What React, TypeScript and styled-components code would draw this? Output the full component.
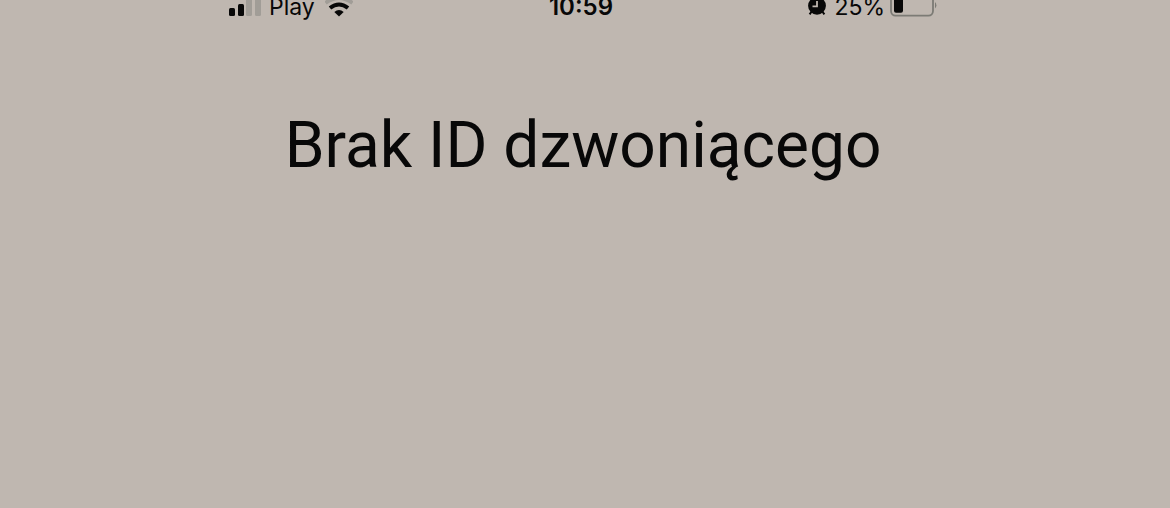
import React from "react";
import styled, { createGlobalStyle } from "styled-components";

const GlobalStyle = createGlobalStyle`
  body {
    margin: 0;
    background: #bfb7b0;
    color: #080808;
    font-family: Inter, "Liberation Sans", sans-serif;
  }
`;

const Screen = styled.main`
  min-height: 100vh;
  box-sizing: border-box;
  padding: 0 18px 0 14px;
  overflow: hidden;
`;

const StatusBar = styled.header`
  display: grid;
  grid-template-columns: 1fr auto 1fr;
  max-width: 708px;
  height: 18px;
  margin: 0 auto;
  font-size: 23px;
  line-height: 14px;
`;

const StatusGroup = styled.div<{ $end?: boolean }>`
  display: flex;
  align-items: flex-start;
  justify-content: ${({ $end }) => ($end ? "flex-end" : "flex-start")};

  svg {
    display: block;
    flex: none;
  }
`;

const Carrier = styled.span`
  margin: 0 10px 0 8px;
`;

const Clock = styled.time`
  padding-right: 4px;
  font-size: 24px;
  font-weight: 600;
`;

const Charge = styled.span`
  margin: 0 5px 0 8px;
`;

const Caller = styled.h1`
  margin: 88px 0 0;
  font-family: Roboto, Inter, sans-serif;
  font-size: 64px;
  line-height: 80px;
  font-weight: 400;
  text-align: center;
`;

const SignalIcon = () => (
  <svg width="32" height="18" viewBox="0 0 32 18" aria-label="Signal strength">
    <rect x="0" y="8" width="6" height="8" rx="1.5" fill="#080808" />
    <rect x="9" y="4" width="6" height="12" rx="1.5" fill="#080808" />
    <rect x="17" y="-1" width="6" height="17" rx="1.5" fill="#a19d97" />
    <rect x="26" y="-5" width="6" height="21" rx="1.5" fill="#a19d97" />
  </svg>
);

const WifiIcon = () => (
  <svg width="28" height="18" viewBox="0 0 28 18" aria-label="Wi-Fi">
    <path d="M0.5 3Q14-7 27.5 3" fill="none" stroke="#a19d97" strokeWidth="4" />
    <path d="M5 8Q14 1 23 8" fill="none" stroke="#080808" strokeWidth="4" />
    <path d="M9.3 12Q14 8 18.7 12L14 16.6Z" fill="#080808" />
  </svg>
);

const AlarmIcon = () => (
  <svg width="18" height="18" viewBox="0 0 18 18" aria-label="Alarm">
    <path d="M4 11L1.6 14.4M14 11L16.4 14.4" stroke="#080808" strokeWidth="2" />
    <circle cx="9" cy="5.8" r="8.9" fill="#080808" />
    <path d="M9 1V6.4H4.5" fill="none" stroke="#bfb7b0" strokeWidth="1.8" />
  </svg>
);

const BatteryIcon = () => (
  <svg width="47" height="18" viewBox="0 0 47 18" aria-label="Battery">
    <rect x="1" y="-6" width="42" height="21.6" rx="4.5" fill="none" stroke="#7c7b75" strokeWidth="1.8" />
    <rect x="4" y="-4" width="9" height="16.7" rx="2" fill="#080808" />
    <path d="M45 2Q47.8 5 45 8.5Z" fill="#7c7b75" />
  </svg>
);

export default function App() {
  return (
    <>
      <GlobalStyle />
      <Screen>
        <StatusBar>
          <StatusGroup>
            <SignalIcon />
            <Carrier>Play</Carrier>
            <WifiIcon />
          </StatusGroup>
          <Clock>10:59</Clock>
          <StatusGroup $end>
            <AlarmIcon />
            <Charge>25%</Charge>
            <BatteryIcon />
          </StatusGroup>
        </StatusBar>
        <Caller>Brak ID dzwoniącego</Caller>
      </Screen>
    </>
  );
}
